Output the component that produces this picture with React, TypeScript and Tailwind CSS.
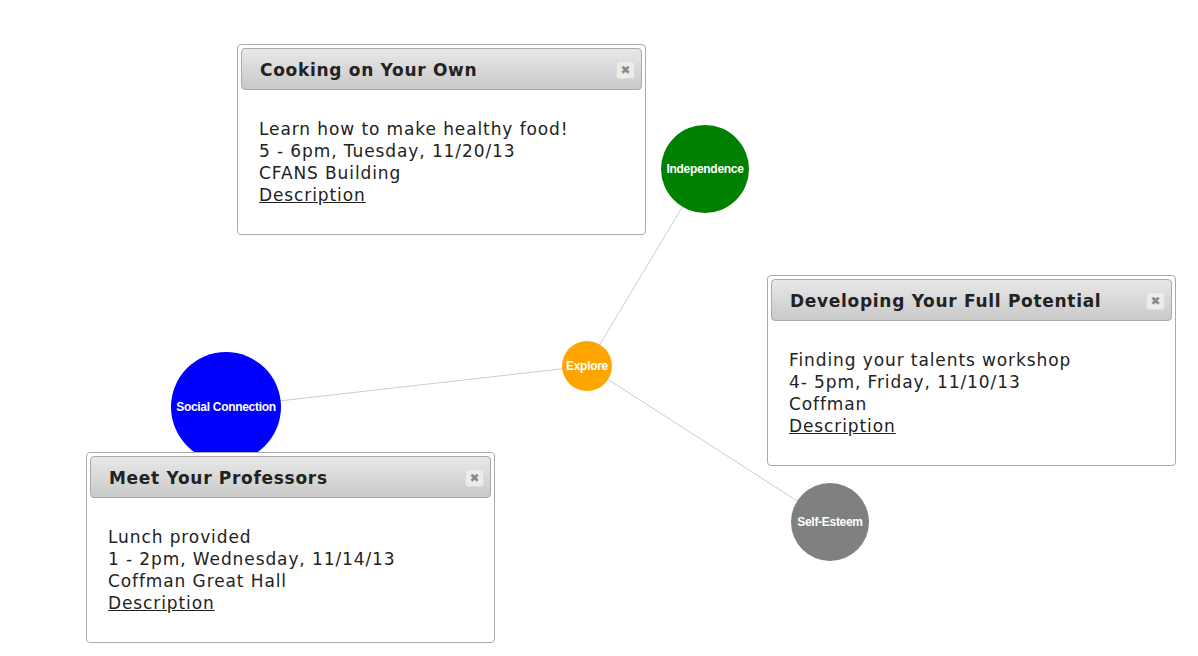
import { JSX } from "react";

type EventBox = {
  title: string;
  lines: string[];
  left: number;
  top: number;
};

const events: EventBox[] = [
  {
    title: "Cooking on Your Own",
    lines: ["Learn how to make healthy food!", "5 - 6pm, Tuesday, 11/20/13", "CFANS Building"],
    left: 237,
    top: 44,
  },
  {
    title: "Developing Your Full Potential",
    lines: ["Finding your talents workshop", "4- 5pm, Friday, 11/10/13", "Coffman"],
    left: 767,
    top: 275,
  },
  {
    title: "Meet Your Professors",
    lines: ["Lunch provided", "1 - 2pm, Wednesday, 11/14/13", "Coffman Great Hall"],
    left: 86,
    top: 452,
  },
];

const nodes = [
  { label: "Explore", x: 587, y: 366, r: 25, color: "bg-[#ffa500]" },
  { label: "Independence", x: 705, y: 169, r: 44, color: "bg-[#008000]" },
  { label: "Social Connection", x: 226, y: 407, r: 55, color: "bg-[#0000ff]" },
  { label: "Self-Esteem", x: 830, y: 522, r: 39, color: "bg-[#808080]" },
];

function Dialog({ ev }: { ev: EventBox }) {
  return (
    <div
      className="absolute w-[409px] h-[191px] bg-white border border-[#aaaaaa] rounded-[4px] p-[3px] flex flex-col"
      style={{ left: ev.left, top: ev.top }}
    >
      <div className="h-[42px] shrink-0 border border-[#aaaaaa] rounded-[4px] bg-gradient-to-b from-[#e8e8e8] to-[#c9c9c9] flex items-center justify-between pl-[18px] pr-[6px]">
        <span className="pt-[3px] font-['DejaVu_Sans',sans-serif] font-bold text-[17px] tracking-[0.7px] text-[#222222]">
          {ev.title}
        </span>
        <span className="w-[19px] h-[18px] mt-[2px] rounded-[3px] bg-[#ececec] border border-[#dcdcdc] flex items-center justify-center text-[#8a8a8a] text-[12px] leading-none font-['DejaVu_Sans',sans-serif]">
          ✖
        </span>
      </div>
      <div className="pl-[18px] pt-[28px] font-['DejaVu_Sans',sans-serif] text-[17px] tracking-[0.9px] leading-[22px] text-[#222222]">
        {ev.lines.map((l) => (
          <div key={l}>{l}</div>
        ))}
        <div>
          <span className="underline">Description</span>
        </div>
      </div>
    </div>
  );
}

export default function App(): JSX.Element {
  const center = nodes[0];
  return (
    <main className="relative w-[1198px] h-[656px] bg-white overflow-hidden">
      <svg className="absolute left-0 top-0" width={1198} height={656}>
        {nodes.slice(1).map((n) => (
          <line key={n.label} x1={center.x} y1={center.y} x2={n.x} y2={n.y} stroke="#cccccc" strokeWidth={1} />
        ))}
      </svg>
      {nodes.map((n) => (
        <div
          key={n.label}
          className={`absolute rounded-full flex items-center justify-center text-white font-bold text-[12px] font-['Liberation_Sans',Arial,sans-serif] tracking-[-0.3px] whitespace-nowrap ${n.color}`}
          style={{ left: n.x - n.r, top: n.y - n.r, width: n.r * 2, height: n.r * 2 }}
        >
          {n.label}
        </div>
      ))}
      {events.map((ev) => (
        <Dialog key={ev.title} ev={ev} />
      ))}
    </main>
  );
}
